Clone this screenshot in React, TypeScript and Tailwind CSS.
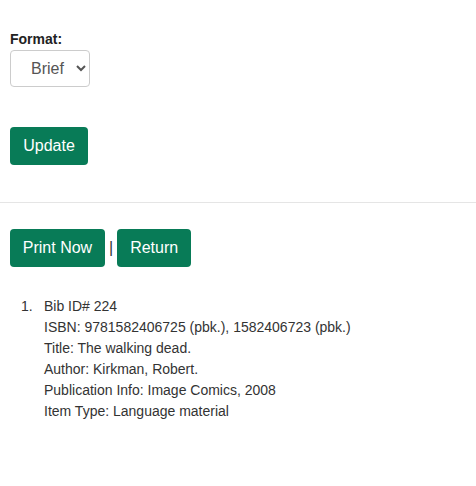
import * as React from "react";

const record = [
  "Bib ID# 224",
  "ISBN: 9781582406725 (pbk.), 1582406723 (pbk.)",
  "Title: The walking dead.",
  "Author: Kirkman, Robert.",
  "Publication Info: Image Comics, 2008",
  "Item Type: Language material",
];

const btn =
  "h-[38px] whitespace-nowrap rounded-[4px] bg-[#087b57] text-[16px] leading-none text-white";

export default function App() {
  return (
    <div className="min-h-[486px] bg-white font-['Liberation_Sans',Arial,sans-serif] text-[#333]">
      <div className="px-[10px] pt-[29px]">
        <label className="block text-[14px] font-bold leading-[20px] text-[#222]">
          Format:
        </label>
        <select
          defaultValue="brief"
          className="mt-[1px] h-[37px] w-[80px] rounded-[4px] border border-[#ccc] bg-white pl-[16px] text-[16px] text-[#555]"
        >
          <option value="brief">Brief</option>
          <option value="full">Full</option>
        </select>
        <div className="mt-[40px]">
          <button className={btn + " w-[78px]"}>Update</button>
        </div>
      </div>

      <hr className="mt-[37px] border-[#e5e5e5]" />

      <div className="px-[10px] pt-[26px]">
        <div className="flex items-center">
          <button className={btn + " w-[95px]"}>Print Now</button>
          <span className="mx-[4px] text-[16px] text-[#333]">|</span>
          <button className={btn + " w-[74px]"}>Return</button>
        </div>
        <ol className="mt-[29px] text-[14px] leading-[21px]">
          <li className="flex">
            <span className="w-[34px] shrink-0 pl-[11px]">1.</span>
            <div>
              {record.map((line) => (
                <div key={line}>{line}</div>
              ))}
            </div>
          </li>
        </ol>
      </div>
    </div>
  );
}
